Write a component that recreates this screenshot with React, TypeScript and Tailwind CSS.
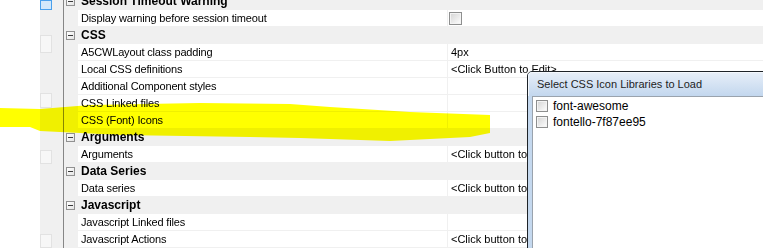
import React from "react";

type Row =
  | { kind: "cat"; label: string }
  | { kind: "prop"; label: string; value?: string; check?: boolean };

const rows: Row[] = [
  { kind: "cat", label: "Session Timeout Warning" },
  { kind: "prop", label: "Display warning before session timeout", check: true },
  { kind: "cat", label: "CSS" },
  { kind: "prop", label: "A5CWLayout class padding", value: "4px" },
  { kind: "prop", label: "Local CSS definitions", value: "<Click Button to Edit>" },
  { kind: "prop", label: "Additional Component styles" },
  { kind: "prop", label: "CSS Linked files" },
  { kind: "prop", label: "CSS (Font) Icons" },
  { kind: "cat", label: "Arguments" },
  { kind: "prop", label: "Arguments", value: "<Click button to Edit>" },
  { kind: "cat", label: "Data Series" },
  { kind: "prop", label: "Data series", value: "<Click button to Edit>" },
  { kind: "cat", label: "Javascript" },
  { kind: "prop", label: "Javascript Linked files" },
  { kind: "prop", label: "Javascript Actions", value: "<Click button to Edit>" },
];

function Check() {
  return (
    <div className="w-[13px] h-[13px] border border-[#8e8f8f] p-px bg-[#f4f4f4]">
      <div className="w-full h-full bg-gradient-to-br from-[#d8d8d8] to-[#fbfbfb]" />
    </div>
  );
}

function Minus() {
  return (
    <div className="w-[9px] h-[9px] border border-[#919191] bg-gradient-to-br from-white to-[#e4e4e4] flex items-center justify-center">
      <div className="w-[5px] h-px bg-[#3a3a3a]" />
    </div>
  );
}

export default function App() {
  return (
    <div className="relative w-[763px] h-[248px] overflow-hidden bg-white flex font-['Liberation_Sans',Arial,sans-serif] text-black">
      <div className="w-[40px] shrink-0 bg-white" />
      <div className="w-[23px] shrink-0 bg-[#f0f0f0] flex flex-col">
        <div className="w-[12px] h-[12px] border border-[#4aa0ec] bg-[#d2e8fb]" />
        <div className="w-[12px] h-[20px] mt-[25px] border border-[#e2e2e2] bg-[#f7f7f7]" />
        <div className="w-[12px] h-[18px] mt-[40px] border border-[#e2e2e2] bg-[#f7f7f7]" />
        <div className="w-[12px] h-[16px] mt-[42px] border border-[#e2e2e2] bg-[#f7f7f7]" />
        <div className="w-[12px] h-[16px] mt-[70px] border border-[#e2e2e2] bg-[#f7f7f7]" />
      </div>
      <div className="w-px shrink-0 bg-[#868686]" />
      <div className="flex-1 flex flex-col -mt-[7px] bg-[#f0f0f0]">
        {rows.map((r, i) =>
          r.kind === "cat" ? (
            <div key={i} className="flex h-[17px] shrink-0 items-center bg-[#f0f0f0]">
              <div className="w-[17px] shrink-0 flex pl-[2px]">
                <Minus />
              </div>
              <span className="text-[12px] leading-[15px] font-bold whitespace-nowrap">{r.label}</span>
            </div>
          ) : (
            <div key={i} className="flex h-[17px] shrink-0 bg-[#f0f0f0]">
              <div className="w-[14px] shrink-0" />
              <div className="w-[369px] shrink-0 h-[16px] bg-white pl-[3px] text-[11px] leading-[16px] tracking-[-0.15px] whitespace-nowrap overflow-hidden">
                {r.label}
              </div>
              <div className="w-px shrink-0" />
              <div className="flex-1 h-[16px] bg-white pl-[3px] text-[11px] leading-[16px] whitespace-nowrap overflow-hidden flex items-center">
                {r.check ? <div className="ml-[-2px] mt-[1px]"><Check /></div> : r.value}
              </div>
            </div>
          )
        )}
      </div>

      {/* highlighter stroke */}
      <svg
        className="absolute left-0 top-0 pointer-events-none mix-blend-multiply"
        width="763"
        height="248"
      >
        <polygon
          points="0,108 40,109 90,105 200,103 290,104 330,107 410,112 490,115 490,133 470,137 390,141 300,138 250,137 120,135 40,131 30,127 0,127"
          fill="#ffff00"
        />
      </svg>

      {/* dialog */}
      <div className="absolute left-[527px] top-[71px] w-[250px] h-[190px] border border-[#1e2328] rounded-tl-[5px] bg-[#c4d8ee] flex flex-col">
        <div className="h-[24px] shrink-0 rounded-tl-[4px] border-l border-t border-[#f4f8fd] bg-gradient-to-b from-[#e6eef8] to-[#c3d7ee] pl-[8px] flex items-center text-[11px] text-[#1e1e1e] whitespace-nowrap">
          Select CSS Icon Libraries to Load
        </div>
        <div className="flex-1 ml-[4px] border border-[#9aa3ad] bg-white pt-[3px] pl-[3px] flex flex-col gap-[4px]">
          {["font-awesome", "fontello-7f87ee95"].map((t) => (
            <div key={t} className="flex items-center gap-[5px] h-[12px]">
              <div className="w-[12px] h-[12px] border border-[#8e8f8f] p-px bg-[#f4f4f4]">
                <div className="w-full h-full bg-gradient-to-br from-[#d8d8d8] to-[#fbfbfb]" />
              </div>
              <span className="text-[12px] leading-[12px] whitespace-nowrap">{t}</span>
            </div>
          ))}
        </div>
      </div>
    </div>
  );
}
